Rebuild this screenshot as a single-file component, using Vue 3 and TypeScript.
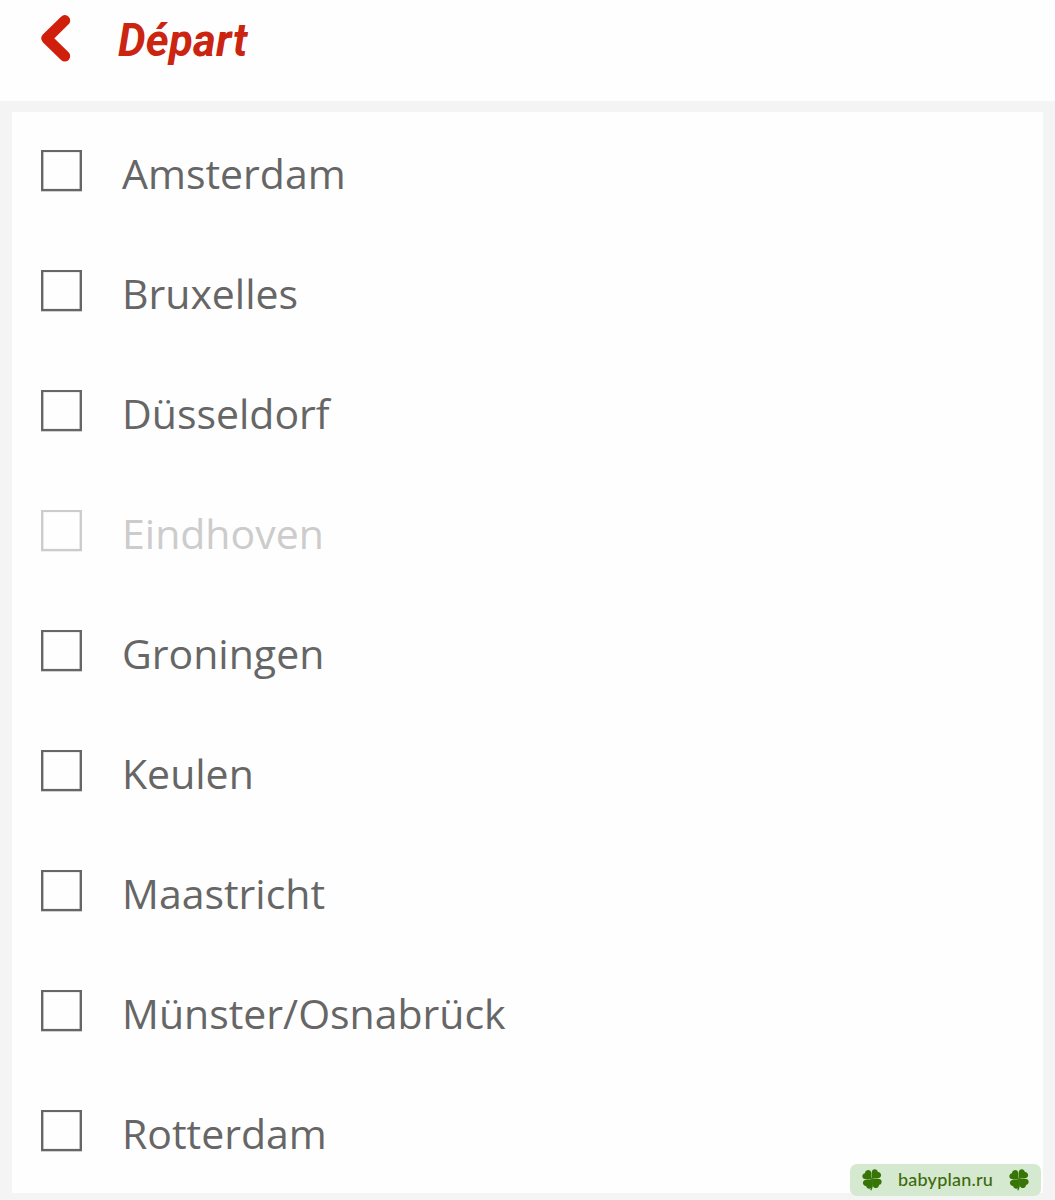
<script setup lang="ts">
interface Departure {
  name: string
  disabled?: boolean
}

const departures: Departure[] = [
  { name: 'Amsterdam' },
  { name: 'Bruxelles' },
  { name: 'Düsseldorf' },
  { name: 'Eindhoven', disabled: true },
  { name: 'Groningen' },
  { name: 'Keulen' },
  { name: 'Maastricht' },
  { name: 'Münster/Osnabrück' },
  { name: 'Rotterdam' },
]

const leafAngles: number[] = [40, 130, 220, 310]
</script>

<template>
  <div class="screen">
    <header class="header">
      <svg class="back" width="32" height="50" viewBox="0 0 32 50" aria-label="Retour">
        <path d="M25.800 7.500 7.600 25.300 25.800 43.100" />
      </svg>
      <h1 class="title">Départ</h1>
    </header>
    <main class="body">
      <ul class="list">
        <li
          v-for="item in departures"
          :key="item.name"
          class="row"
          :class="{ disabled: item.disabled }"
        >
          <svg class="box" width="41" height="42" viewBox="0 0 41 42">
            <rect x="1.2" y="0.9" width="38.6" height="39.2" />
          </svg>
          <span class="label">{{ item.name }}</span>
        </li>
      </ul>
    </main>
    <div class="watermark">
      <svg v-for="n in 2" :key="n" class="clover" :class="'clover-' + n" width="20" height="22" viewBox="0 0 20 22">
        <path
          v-for="angle in leafAngles"
          :key="angle"
          :transform="`rotate(${angle} 10 10)`"
          d="M10 10C8.500 7.500 4.800 5.800 4.800 3.100 4.800 .3 8.500 -.8 10 .9 11.500 -.8 15.200 .3 15.200 3.100 15.200 5.800 11.500 7.500 10 10Z"
        />
        <path class="stem" d="M10 10Q11 17 8.800 21.300" />
      </svg>
      <span class="site">babyplan.ru</span>
    </div>
  </div>
</template>

<style>
body {
  margin: 0;
  background: #f4f4f4;
}
</style>

<style scoped>
.screen {
  position: relative;
  width: 1055px;
  height: 1200px;
  overflow: hidden;
  background: #f4f4f4;
}

.header {
  display: flex;
  align-items: flex-start;
  box-sizing: border-box;
  height: 100.5px;
  padding: 13px 0 0 39px;
  background: #fefefe;
}

.back path {
  fill: none;
  stroke: #d0200c;
  stroke-width: 10.8;
  stroke-linecap: round;
  stroke-linejoin: round;
}

.title {
  margin: 1px 0 0 47px;
  color: #cb2410;
  font: italic 700 45.5px/54px Roboto, sans-serif;
  letter-spacing: 0.3px;
  transform: scaleX(0.96);
  transform-origin: left;
}

.body {
  padding: 11.5px 12px 0;
}

.list {
  box-sizing: border-box;
  height: 1081px;
  margin: 0;
  padding: 0;
  background: #fefefe;
  list-style: none;
}

.row {
  display: flex;
  align-items: center;
  height: 120.05px;
  padding-left: 29px;
  color: #666;
}

.disabled {
  color: #ccc;
}

.box {
  flex: none;
  margin-top: -3px;
}

.box rect {
  fill: none;
  stroke: currentColor;
  stroke-width: 2.4;
}

.label {
  margin: 1px 0 0 40px;
  font: 400 41px/56px 'Open Sans', sans-serif;
}

.watermark {
  position: absolute;
  top: 1164px;
  left: 850px;
  display: flex;
  align-items: center;
  justify-content: space-between;
  box-sizing: border-box;
  width: 191px;
  height: 32px;
  padding: 0 12px;
  border-radius: 7px;
  background: #d5e8d0;
  color: #3d6b0a;
}

.clover {
  fill: #377507;
}

.clover-2 {
  order: 3;
}

.stem {
  fill: none;
  stroke: #377507;
  stroke-width: 1.3;
}

.site {
  order: 2;
  margin-bottom: 2px;
  font: 500 18px/30px Lato, sans-serif;
  letter-spacing: 0.2px;
}
</style>
